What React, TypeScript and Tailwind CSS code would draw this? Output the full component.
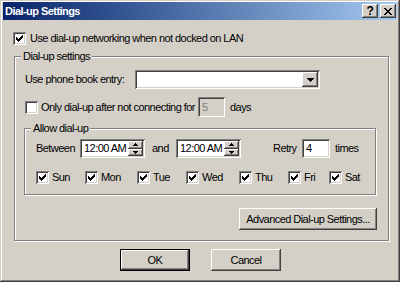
import React from "react";

const raised =
  "bg-[#d4d0c8] shadow-[inset_-1px_-1px_#404040,inset_1px_1px_#fff,inset_-2px_-2px_#808080,inset_2px_2px_#d4d0c8]";
const sunken =
  "shadow-[inset_1px_1px_#808080,inset_-1px_-1px_#fff,inset_2px_2px_#404040,inset_-2px_-2px_#d4d0c8]";
const etched = "border border-[#808080] shadow-[inset_1px_1px_#fff,1px_1px_#fff]";

function CheckMark() {
  // classic 7x7 pixel tick
  const cols = [2, 3, 4, 3, 2, 1, 0];
  return (
    <svg width="7" height="7" viewBox="0 0 7 7" shapeRendering="crispEdges">
      {cols.map((y, x) => (
        <rect key={x} x={x} y={y} width="1" height="3" fill="#000" />
      ))}
    </svg>
  );
}

function CheckBox({ checked }: { checked?: boolean }) {
  return (
    <span className={`flex h-[13px] w-[13px] shrink-0 items-center justify-center bg-white ${sunken}`}>
      {checked && <CheckMark />}
    </span>
  );
}

function Arrow({ dir, size = 5 }: { dir: "up" | "down"; size?: number }) {
  const h = Math.ceil(size / 2);
  const pts = dir === "up" ? `0,${h} ${size},${h} ${size / 2},0` : `0,0 ${size},0 ${size / 2},${h}`;
  return (
    <svg width={size} height={h} viewBox={`0 0 ${size} ${h}`} shapeRendering="crispEdges">
      <polygon points={pts} fill="#000" />
    </svg>
  );
}

function Spinner({ value }: { value: string }) {
  return (
    <div className={`flex h-[19px] w-[65px] shrink-0 bg-white p-[2px] ${sunken}`}>
      <span className="flex flex-1 items-center pl-[2px]">{value}</span>
      <div className="flex w-[15px] flex-col">
        <span className={`flex flex-1 items-center justify-center ${raised}`}>
          <Arrow dir="up" />
        </span>
        <span className={`flex flex-1 items-center justify-center ${raised}`}>
          <Arrow dir="down" />
        </span>
      </div>
    </div>
  );
}

function Button({ label, className = "", isDefault }: { label: string; className?: string; isDefault?: boolean }) {
  if (isDefault) {
    return (
      <div className={`h-[22px] border border-black ${className}`}>
        <div className={`flex h-full w-full items-center justify-center ${raised}`}>{label}</div>
      </div>
    );
  }
  return <div className={`flex h-[22px] items-center justify-center ${raised} ${className}`}>{label}</div>;
}

function Group({ label, className, children }: { label: string; className: string; children: React.ReactNode }) {
  return (
    <div className={`relative ${etched} ${className}`}>
      <span className="absolute -top-[7px] left-[6px] bg-[#d4d0c8] px-[2px] leading-[13px]">{label}</span>
      {children}
    </div>
  );
}

const days = [
  { name: "Sun", w: "w-[49px]" },
  { name: "Mon", w: "w-[52px]" },
  { name: "Tue", w: "w-[49px]" },
  { name: "Wed", w: "w-[53px]" },
  { name: "Thu", w: "w-[49px]" },
  { name: "Fri", w: "w-[41px]" },
  { name: "Sat", w: "w-[40px]" }
];

export default function App() {
  return (
    <div className="h-[282px] w-[400px] overflow-hidden whitespace-nowrap bg-[#d4d0c8] px-[3px] pt-[2px] font-['Liberation_Sans',Arial,sans-serif] text-[11px] leading-none tracking-[-0.55px] text-black shadow-[inset_-1px_-1px_#404040,inset_1px_1px_#d4d0c8,inset_-2px_-2px_#808080,inset_2px_2px_#fff]">
      {/* caption */}
      <div className="flex h-[18px] items-center bg-gradient-to-r from-[#0a246a] to-[#a6caf0] pl-[2px] pr-[1px]">
        <span className="flex-1 font-bold text-white">Dial-up Settings</span>
        <span className={`flex h-[14px] w-[16px] items-center justify-center pb-[1px] text-[12px] font-bold ${raised}`}>?</span>
        <span className={`ml-[2px] flex h-[14px] w-[16px] items-center justify-center ${raised}`}>
          <svg width="8" height="7" viewBox="0 0 8 7" shapeRendering="crispEdges">
            <path d="M0 0h2l2 2.5L6 0h2L5 3.5 8 7H6L4 4.5 2 7H0l3-3.5z" fill="#000" />
          </svg>
        </span>
      </div>

      <div className="ml-[10px] mt-[12px] flex h-[13px] items-center">
        <CheckBox checked />
        <span className="ml-[4px]">Use dial-up networking when not docked on LAN</span>
      </div>

      <Group label="Dial-up settings" className="ml-[11px] mt-[11px] h-[185px] w-[375px]">
        <div className="ml-[10px] mt-[13px] flex items-center">
          <span className="w-[110px] shrink-0">Use phone book entry:</span>
          <div className={`flex h-[19px] w-[185px] shrink-0 bg-white p-[2px] ${sunken}`}>
            <span className="flex-1" />
            <span className={`flex w-[16px] items-center justify-center ${raised}`}>
              <Arrow dir="down" size={7} />
            </span>
          </div>
        </div>

        <div className="ml-[10px] mt-[8px] flex h-[20px] items-center">
          <CheckBox />
          <span className="ml-[3px] w-[157px] shrink-0">Only dial-up after not connecting for</span>
          <div className={`flex h-[20px] w-[27px] shrink-0 items-center pl-[4px] text-[#808080] ${sunken}`}>5</div>
          <span className="ml-[5px]">days</span>
        </div>

        <Group label="Allow dial-up" className="ml-[9px] mt-[11px] h-[67px] w-[352px]">
          <div className="ml-[11px] mt-[10px] flex h-[19px] items-center">
            <span className="w-[44px] shrink-0">Between</span>
            <Spinner value="12:00 AM" />
            <span className="ml-[7px] w-[24px] shrink-0">and</span>
            <Spinner value="12:00 AM" />
            <span className="ml-[32px] w-[29px] shrink-0">Retry</span>
            <div className={`flex h-[19px] w-[28px] shrink-0 items-center bg-white pl-[4px] ${sunken}`}>4</div>
            <span className="ml-[5px]">times</span>
          </div>
          <div className="ml-[11px] mt-[13px] flex h-[13px] items-center">
            {days.map((d) => (
              <div key={d.name} className={`flex shrink-0 items-center ${d.w}`}>
                <CheckBox checked />
                <span className="ml-[3px]">{d.name}</span>
              </div>
            ))}
          </div>
        </Group>

        <div className="mt-[13px] flex justify-end pr-[11px]">
          <Button label="Advanced Dial-up Settings..." className="w-[138px]" />
        </div>
      </Group>

      <div className="ml-[117px] mt-[8px] flex gap-[21px]">
        <Button label="OK" className="w-[70px]" isDefault />
        <Button label="Cancel" className="w-[70px]" />
      </div>
    </div>
  );
}
